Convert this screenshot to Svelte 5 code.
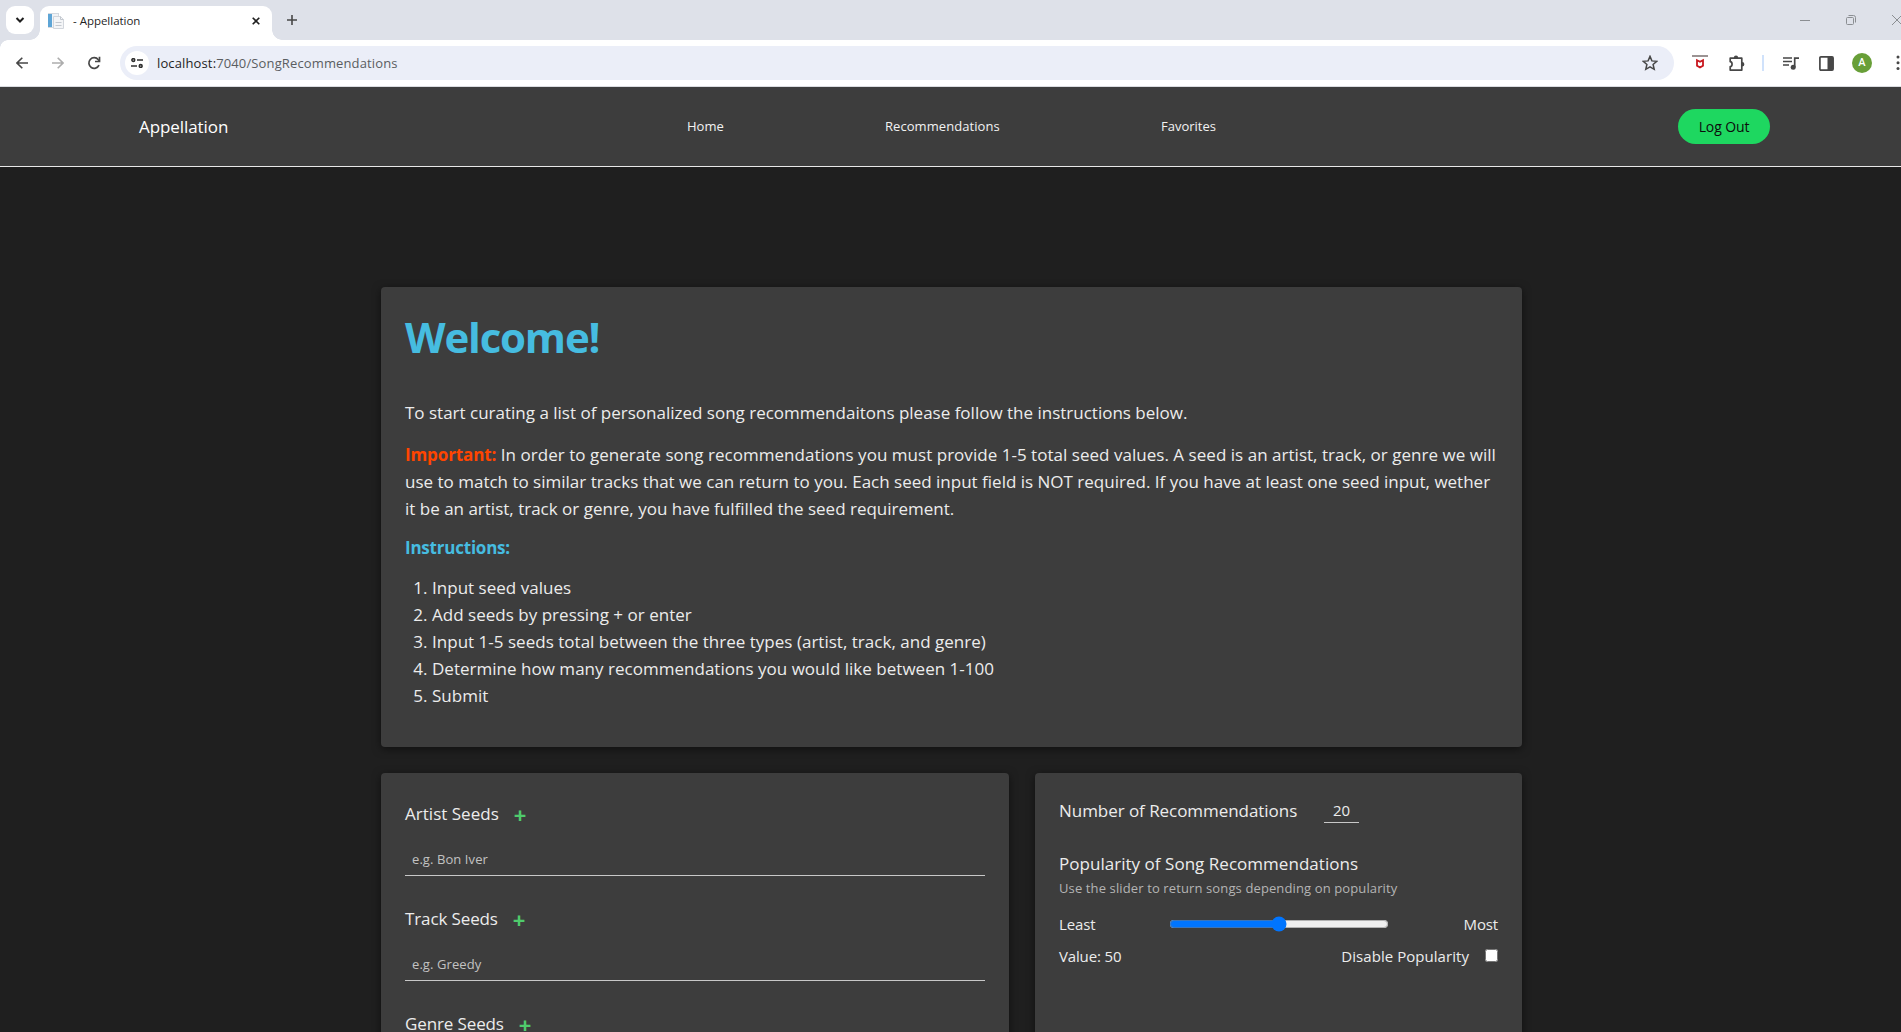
<script>
  const links = [
    { name: 'Home', cls: 'home' },
    { name: 'Recommendations', cls: 'recs' },
    { name: 'Favorites', cls: 'favs' }
  ];
  const steps = [
    'Input seed values',
    'Add seeds by pressing + or enter',
    'Input 1-5 seeds total between the three types (artist, track, and genre)',
    'Determine how many recommendations you would like between 1-100',
    'Submit'
  ];
  const seeds = [
    { label: 'Artist Seeds', hint: 'e.g. Bon Iver' },
    { label: 'Track Seeds', hint: 'e.g. Greedy' },
    { label: 'Genre Seeds', hint: 'e.g. Pop' }
  ];
  let popularity = $state(50);
  let amount = $state('20');
</script>

<div class="window">
  <div class="strip">
    <div class="search-tabs">
      <svg width="10" height="8" viewBox="0 0 10 8"><path d="M1.5 2 5 5.5 8.5 2" fill="none" stroke="#1f1f1f" stroke-width="2" /></svg>
    </div>
    <div class="tab">
      <svg class="favicon" width="16" height="16" viewBox="0 0 16 16">
        <rect x="0.5" y="0.5" width="10" height="14" fill="#f1f3f6" stroke="#d4d9df" />
        <rect x="0" y="1" width="4" height="13" fill="#5ea5d6" />
        <path d="M5.5 3.5h7l3 3v9h-10z" fill="#f4f5f7" stroke="#d2d6dc" />
        <path d="M12.5 3.5v3h3M7.500 9.500h6M7.500 12.500h6" fill="none" stroke="#c3c8cf" />
      </svg>
      <span class="tab-title">- Appellation</span>
      <svg class="tab-close" width="8" height="8" viewBox="0 0 8 8"><path d="M.7.7l6.600 6.600M7.300.7.7 7.300" stroke="#1f1f1f" stroke-width="1.600" /></svg>
    </div>
    <svg class="new-tab" width="10" height="10" viewBox="0 0 10 10"><path d="M5 0v10M0 5h10" stroke="#474747" stroke-width="1.600" /></svg>
    <div class="controls">
      <svg width="10" height="10" viewBox="0 0 10 10"><path d="M0 5.500h10" stroke="#8b8e92" /></svg>
      <svg width="10" height="10" viewBox="0 0 10 10" fill="none" stroke="#8b8e92"><rect x=".5" y="2.500" width="7" height="7" rx="1" /><path d="M2.500.5h5a2 2 0 0 1 2 2v5" /></svg>
      <svg width="10" height="10" viewBox="0 0 10 10"><path d="M0 0l10 10M10 0 0 10" stroke="#8b8e92" /></svg>
    </div>
  </div>

  <div class="toolbar">
    <svg class="back" width="12" height="12" viewBox="0 0 12 12" fill="none" stroke="#474747" stroke-width="1.600"><path d="M12 6H1.200M6.300.7 1 6l5.300 5.300" /></svg>
    <svg class="forward" width="12" height="12" viewBox="0 0 12 12" fill="none" stroke="#adadad" stroke-width="1.600"><path d="M0 6h10.800M5.700.7 11 6l-5.300 5.300" /></svg>
    <svg class="reload" width="14" height="14" viewBox="0 0 14 14" fill="none" stroke="#474747" stroke-width="1.700"><path d="M12 9.200A5.300 5.300 0 1 1 11.300 3.700L12.600 5.200" /><path d="M12.500.8v4.700H8" /></svg>
    <div class="omnibox">
      <span class="site-info">
        <svg width="12" height="10" viewBox="0 0 12 10" fill="none" stroke="#303030" stroke-width="1.600"><circle cx="2.300" cy="2" r="1.400" /><path d="M6 2h6M0 8h6" /><circle cx="9.700" cy="8" r="1.400" /></svg>
      </span>
      <span class="url"><b>localhost:</b>7040/SongRecommendations</span>
      <svg class="star" width="16" height="16" viewBox="0 0 16 16"><path d="M8 1.400l1.900 4.500 4.900.4-3.700 3.200 1.100 4.800L8 11.800l-4.200 2.500 1.100-4.800L1.200 6.300l4.900-.4z" fill="none" stroke="#474747" stroke-width="1.500" /></svg>
    </div>
    <svg class="shield" width="16" height="16" viewBox="0 0 16 16"><path d="M0 1h16" stroke="#9b9393" stroke-width="2" /><path d="M5 5.200l3 1.600 3-1.600v5.600L8 12.400l-3-1.600z" fill="none" stroke="#c8171e" stroke-width="1.800" /></svg>
    <svg class="puzzle" width="18" height="17" viewBox="0 0 18 17"><path d="M2.200 3.200h11.600v11.900H2.200v-3.400c2.500-.3 2.500-4.700 0-5z" fill="none" stroke="#474747" stroke-width="1.700" stroke-linejoin="round" /><path d="M5.800 3a2.200 2.400 0 0 1 4.400 0zM14 7a2.400 2.200 0 0 1 0 4.400z" fill="#474747" /></svg>
    <span class="divider"></span>
    <svg class="media" width="16" height="13" viewBox="0 0 16 13"><path d="M0 1h9M0 4.500h9M0 8h6M11.700 10V1.200H16" fill="none" stroke="#474747" stroke-width="1.700" /><circle cx="10.200" cy="10.300" r="2.500" fill="#474747" /></svg>
    <svg class="panel" width="15" height="15" viewBox="0 0 15 15"><rect x=".9" y=".9" width="13.200" height="13.200" rx="1" fill="none" stroke="#474747" stroke-width="1.700" /><path d="M8.500 1H14v13H8.500z" fill="#474747" /></svg>
    <span class="avatar">A</span>
    <svg class="more" width="4" height="16" viewBox="0 0 4 16" fill="#474747"><circle cx="2" cy="2" r="1.500" /><circle cx="2" cy="7.800" r="1.500" /><circle cx="2" cy="13.600" r="1.500" /></svg>
  </div>

  <nav>
    <span class="brand">Appellation</span>
    <div class="links">
      {#each links as l}<a class={l.cls} href="#top">{l.name}</a>{/each}
    </div>
    <button class="logout">Log Out</button>
  </nav>

  <main>
    <section class="card welcome">
      <h1>Welcome!</h1>
      <p class="intro">To start curating a list of personalized song recommendaitons please follow the instructions below.</p>
      <p class="note">
        <span class="l1"><strong>Important:</strong> In order to generate song recommendations you must provide 1-5 total seed values. A seed is an artist, track, or genre we will</span>
        <span class="l2">use to match to similar tracks that we can return to you. Each seed input field is NOT required. If you have at least one seed input, wether</span>
        <span class="l3">it be an artist, track or genre, you have fulfilled the seed requirement.</span>
      </p>
      <h2>Instructions:</h2>
      <ol>
        {#each steps as s}<li>{s}</li>{/each}
      </ol>
    </section>

    <div class="columns">
      <section class="card seeds">
        {#each seeds as s}
          <div class="seed">
            <div class="seed-head"><span>{s.label}</span><button class="add">+</button></div>
            <input type="text" placeholder={s.hint} />
          </div>
        {/each}
      </section>

      <section class="card options">
        <div class="amount"><span>Number of Recommendations</span><input type="text" bind:value={amount} /></div>
        <div class="pop-title">Popularity of Song Recommendations</div>
        <div class="pop-sub">Use the slider to return songs depending on popularity</div>
        <div class="row">
          <span>Least</span>
          <input type="range" min="0" max="100" bind:value={popularity} />
          <span>Most</span>
        </div>
        <div class="row second">
          <span>Value: {popularity}</span>
          <label><span>Disable Popularity</span><input type="checkbox" /></label>
        </div>
      </section>
    </div>
  </main>
</div>

<style>
  :global(body) { margin: 0; background: #1f1f1f; overflow: hidden; }
  * { box-sizing: border-box; }
  svg { display: block; flex: none; }
  .window {
    width: 1901px; height: 1032px; overflow: hidden; display: flex; flex-direction: column;
    background: #1f1f1f; color: #ececec;
    font-family: "Open Sans", "Noto Sans", sans-serif; font-size: 17px; line-height: 27px;
    white-space: nowrap;
  }
  button, input { font-family: inherit; }

  .strip { height: 40px; flex: none; background: #dee1e9; display: flex; align-items: flex-start; padding: 6px 0 0 6px; }
  .search-tabs { width: 28px; height: 28px; border-radius: 9px; background: #fff; display: flex; align-items: center; justify-content: center; }
  .tab { position: relative; width: 232px; height: 34px; margin-left: 6px; background: #fff; border-radius: 9px 9px 0 0; display: flex; align-items: center; padding: 0 12px 5px 8px; }
  .tab::before, .tab::after { content: ""; position: absolute; bottom: 0; width: 10px; height: 10px; }
  .tab::before { left: -10px; background: radial-gradient(circle at 0 0, transparent 9.500px, #fff 10px); }
  .tab::after { right: -10px; background: radial-gradient(circle at 100% 0, transparent 9.500px, #fff 10px); }
  .tab-title { margin-left: 9px; font-size: 11.500px; line-height: 16px; letter-spacing: -0.02px; color: #1f1f1f; flex: 1; }
  .new-tab { margin: 9px 0 0 15px; }
  .controls { display: flex; gap: 36px; margin: 9px -1px 0 auto; }

  .toolbar { height: 47px; flex: none; background: #fff; border-bottom: 1px solid #dadce0; display: flex; align-items: center; padding-left: 16px; position: relative; }
  .toolbar::before { content: ""; position: absolute; left: 0; top: 0; width: 8px; height: 8px; background: radial-gradient(circle at 100% 100%, transparent 7.500px, #dee1e9 8px); }
  .forward { margin-left: 24px; }
  .reload { margin-left: 23px; }
  .omnibox { width: 1554px; height: 34px; margin-left: 19px; border-radius: 17px; background: #ebeef8; display: flex; align-items: center; padding: 0 16px 0 5px; }
  .site-info { width: 24px; height: 24px; border-radius: 50%; background: #fff; display: flex; align-items: center; justify-content: center; }
  .url { margin-left: 8px; font-size: 13px; letter-spacing: 0.13px; line-height: 20px; color: #5a5d61; flex: 1; }
  .url b { font-weight: 400; color: #1f1f1f; }
  .shield { margin-left: 18px; }
  .puzzle { margin-left: 20px; }
  .divider { width: 2px; height: 16px; margin-left: 16px; background: #d0e2fb; }
  .media { margin-left: 19px; }
  .panel { margin-left: 20px; }
  .avatar { width: 20px; height: 20px; margin-left: 18px; border-radius: 50%; background: #689f38; color: #fff; font: 500 11px/20px Roboto, sans-serif; text-align: center; flex: none; }
  .more { margin-left: 24px; }

  nav { height: 80px; flex: none; background: #3d3d3d; border-bottom: 1px solid #e8e8e8; display: flex; align-items: center; padding: 0 131px 0 139px; }
  .brand { width: 548px; font-size: 17px; letter-spacing: -0.08px; color: #fff; }
  .links { display: flex; gap: 162px; flex: 1; font-size: 13px; letter-spacing: 0.06px; }
  .links a { color: #f2f2f2; text-decoration: none; }
  .home { width: 36px; letter-spacing: 0; }
  .recs { width: 114px; }
  .favs { width: 55px; letter-spacing: 0; }
  .logout { width: 92px; height: 35px; border: 0; padding: 0; border-radius: 18px; background: #1ed760; color: #0c0c0c; font-size: 14px; line-height: 20px; letter-spacing: -0.1px; }

  main { width: 1141px; margin: 120px 0 0 381px; display: flex; flex-direction: column; gap: 26px; }
  .card { background: #3d3d3d; border-radius: 4px; box-shadow: 0 2px 8px rgba(0, 0, 0, 0.500); }
  .welcome { height: 460px; padding: 24px; }
  h1 { margin: 0; font-size: 42px; line-height: 52px; font-weight: 700; letter-spacing: -1.2px; color: #46bce0; }
  p { margin: 0; }
  .intro { margin-top: 36px; }
  .note { margin-top: 15px; }
  .note span { display: block; }
  .note .l1 { letter-spacing: 0.03px; }
  strong { color: #ff4500; font-weight: 700; letter-spacing: -0.1px; }
  h2 { margin: 12px 0 13px; font-size: 17px; line-height: 27px; font-weight: 700; letter-spacing: -0.22px; color: #46bce0; }
  ol { margin: 0; padding: 0 0 0 27px; letter-spacing: 0.02px; }

  .columns { display: grid; grid-template-columns: 628px 487px; gap: 26px; }
  .seeds { height: 420px; padding: 27px 24px; display: flex; flex-direction: column; gap: 29px; }
  .seed-head { display: flex; align-items: center; height: 27px; gap: 15px; letter-spacing: -0.12px; }
  .seed:first-child .seed-head { letter-spacing: 0.02px; }
  .add { border: 0; padding: 2px 0 0; background: none; color: #4fcb6c; font-size: 22px; line-height: 27px; font-weight: 700; }
  .seed input { display: block; width: 580px; height: 33px; margin-top: 16px; border: 0; border-bottom: 1px solid #c8c8c8; background: none; padding: 0 6px 0 7px; font-size: 13px; letter-spacing: 0.08px; color: #ececec; outline: 0; }
  .seed input::placeholder { color: #c2c2c2; opacity: 1; }

  .options { height: 420px; padding: 24px; font-size: 15px; line-height: 24px; letter-spacing: -0.15px; }
  .amount { display: flex; height: 27px; font-size: 17px; line-height: 27px; letter-spacing: -0.05px; }
  .amount span { width: 265px; }
  .amount input { width: 35px; height: 23px; margin-top: 3px; border: 0; border-bottom: 1px solid #c8c8c8; background: none; padding: 0 0 2px; font-size: 15px; text-align: center; color: #ececec; outline: 0; }
  .pop-title { margin-top: 26px; font-size: 17px; line-height: 27px; letter-spacing: 0.03px; }
  .pop-sub { margin-top: 1px; font-size: 13px; line-height: 20px; letter-spacing: 0.12px; color: #b4b4b4; }
  .row { display: flex; justify-content: space-between; align-items: center; height: 24px; margin-top: 14px; }
  .second { margin-top: 8px; }
  .row input[type="range"] { width: 220px; margin: 0; accent-color: #0075ff; }
  .row label { display: flex; align-items: center; gap: 16px; letter-spacing: 0.05px; }
  .row input[type="checkbox"] { width: 13px; height: 13px; margin: 0 0 2px; }
</style>
